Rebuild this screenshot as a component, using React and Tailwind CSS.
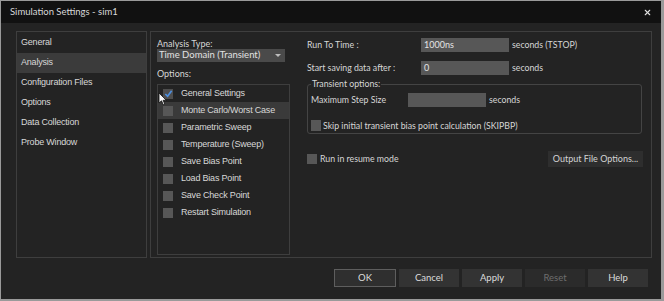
import { X } from "lucide-react";

const nav = ["General", "Analysis", "Configuration Files", "Options", "Data Collection", "Probe Window"];
const options = [
  "General Settings",
  "Monte Carlo/Worst Case",
  "Parametric Sweep",
  "Temperature (Sweep)",
  "Save Bias Point",
  "Load Bias Point",
  "Save Check Point",
  "Restart Simulation",
];

const ui = { fontFamily: 'Lato, "Noto Sans", sans-serif' };
const arial = { fontFamily: '"Liberation Sans", Arial, sans-serif' };

function Box({ className = "" }) {
  return <span className={`block w-[10px] h-[10px] bg-[#575757] shrink-0 ${className}`} />;
}

function Field({ value, className = "" }) {
  return (
    <div className={`h-[14px] bg-[#575757] text-[9px] leading-[14px] pl-[3px] text-[#e4e4e4] ${className}`}>
      {value}
    </div>
  );
}

export default function App() {
  return (
    <div
      className="w-[664px] h-[301px] bg-[#232323] border-t border-l border-r-[3px] border-b-2 border-[#9a9a9a] flex flex-col text-[#d6d6d6] overflow-hidden"
      style={ui}
    >
      <div className="h-[22px] bg-[#111111] flex items-center justify-between pl-[9px] pr-[9px] shrink-0">
        <span className="text-[9.5px] text-[#d8d8d8]">Simulation Settings - sim1</span>
        <X className="w-[9px] h-[9px] text-[#e0e0e0]" strokeWidth={3} />
      </div>

      <div className="flex-1 flex flex-col pl-[15px] pr-[9px] pt-[8px]">
        <div className="flex gap-[3px] h-[227px]">
          {/* left nav */}
          <div className="w-[131px] border border-[#3e3e3e] flex flex-col pt-[1px]" style={arial}>
            {nav.map((n) => (
              <div
                key={n}
                className={`h-[20px] flex items-center pl-[4px] text-[9px] tracking-[-0.2px] text-[#d8d8d8] ${
                  n === "Analysis" ? "bg-[#3b3b3b]" : ""
                }`}
              >
                {n}
              </div>
            ))}
          </div>

          {/* content panel */}
          <div className="flex-1 border border-[#3e3e3e] flex pl-[6px] pr-[9px]">
            <div className="w-[133px] flex flex-col pt-[7px]">
              <div className="text-[9px] leading-[10px]">Analysis Type:</div>
              <div className="w-[128px] h-[13px] bg-[#4a4a4a] flex items-center justify-between pl-[2px] pr-[4px]">
                <span className="text-[9.5px] text-[#e2e2e2]">Time Domain (Transient)</span>
                <span className="w-0 h-0 border-l-[3px] border-r-[3px] border-t-[3px] border-l-transparent border-r-transparent border-t-[#bdbdbd]" />
              </div>
              <div className="text-[9px] leading-[10px] mt-[7px]">Options:</div>
              <div className="relative mt-[5px] h-[171px] border border-[#3e3e3e] flex flex-col" style={arial}>
                {options.map((o, i) => (
                  <div
                    key={o}
                    className={`h-[17px] flex items-center gap-[8px] pl-[5px] text-[9px] tracking-[-0.2px] text-[#d8d8d8] ${
                      i === 1 ? "bg-[#3a3a3a]" : ""
                    }`}
                  >
                    {i === 0 ? (
                      <span className="w-[10px] h-[10px] bg-[#4e4e4e] flex items-center justify-center shrink-0">
                        <svg width="9" height="9" viewBox="0 0 10 10">
                          <path d="M1.5 5.5 L4 8 L8.5 2" fill="none" stroke="#4d8fe0" strokeWidth="1.8" />
                        </svg>
                      </span>
                    ) : (
                      <Box className={i === 1 ? "bg-[#404040]" : ""} />
                    )}
                    <span>{o}</span>
                  </div>
                ))}
                <svg className="absolute left-[0px] top-[7px]" width="9" height="14" viewBox="0 0 9 14">
                  <path d="M1 1 L1 11 L3.5 8.8 L5.3 12.8 L6.8 12.1 L5.1 8.3 L8.2 8.2 Z" fill="#f4f4f4" stroke="#111" strokeWidth="0.8" />
                </svg>
              </div>
            </div>

            <div className="flex-1 ml-[17px] flex flex-col pt-[6px] text-[8.75px]">
              <div className="flex items-center">
                <span className="w-[114px]">Run To Time :</span>
                <Field value="1000ns" className="w-[88px]" />
                <span className="ml-[3px]">seconds (TSTOP)</span>
              </div>
              <div className="flex items-center mt-[9px]">
                <span className="w-[114px]">Start saving data after :</span>
                <Field value="0" className="w-[88px]" />
                <span className="ml-[3px]">seconds</span>
              </div>

              <fieldset className="mt-[4px] h-[55px] border border-[#444444] rounded-[3px] pl-[3px]">
                <legend className="text-[8.75px] leading-[10px] px-[1px]">Transient options:</legend>
                <div className="flex items-center mt-[4px]">
                  <span className="w-[97px]">Maximum Step Size</span>
                  <Field value="" className="w-[78px]" />
                  <span className="ml-[3px]">seconds</span>
                </div>
                <div className="flex items-center gap-[2px] mt-[12px]">
                  <Box className="h-[11px]" />
                  <span>Skip initial transient bias point calculation (SKIPBP)</span>
                </div>
              </fieldset>

              <div className="flex items-start justify-between mt-[17px]">
                <div className="flex items-center gap-[3px] pt-[1px]">
                  <Box />
                  <span>Run in resume mode</span>
                </div>
                <button className="w-[95px] h-[16px] bg-[#2e2e2e] text-[9px] text-[#d4d4d4] mr-[-1px]">
                  Output File Options...
                </button>
              </div>
            </div>
          </div>
        </div>

        <div className="flex justify-end gap-[3px] mt-[11px] pr-[4px] text-[9.5px]">
          <button className="w-[62px] h-[18px] bg-[#2f2f2f] border border-[#5e5e5e] text-[#dcdcdc]">OK</button>
          <button className="w-[60px] h-[18px] bg-[#333333] text-[#dcdcdc]">Cancel</button>
          <button className="w-[60px] h-[18px] bg-[#333333] text-[#dcdcdc]">Apply</button>
          <button className="w-[60px] h-[18px] bg-[#2b2b2b] text-[#6e6e6e]">Reset</button>
          <button className="w-[60px] h-[18px] bg-[#333333] text-[#dcdcdc]">Help</button>
        </div>
      </div>
    </div>
  );
}
